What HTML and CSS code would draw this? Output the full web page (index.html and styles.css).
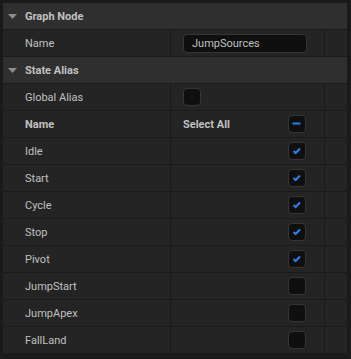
FILE: index.html
```html
<!DOCTYPE html>
<html>
<head>
<meta charset="utf-8">
<link rel="stylesheet" href="styles.css">
</head>
<body>
<div class="panel">
  <div class="section-header">
    <svg class="caret" width="9" height="5" viewBox="0 0 9 5"><path d="M0 0H9L4.5 5Z" fill="#8c8c8c"/></svg>
    <span>Graph Node</span>
  </div>
  <div class="row">
    <div class="cell label">Name</div>
    <div class="cell value"><div class="text-input">JumpSources</div></div>
    <div class="cell reset"></div>
  </div>
  <div class="section-header">
    <svg class="caret" width="9" height="5" viewBox="0 0 9 5"><path d="M0 0H9L4.5 5Z" fill="#8c8c8c"/></svg>
    <span>State Alias</span>
  </div>
  <div class="row">
    <div class="cell label">Global Alias</div>
    <div class="cell value"><span class="checkbox"></span></div>
    <div class="cell reset"></div>
  </div>
  <div class="row">
    <div class="cell label bold">Name</div>
    <div class="cell value"><span class="state-col bold">Select All</span><span class="checkbox"><svg width="18" height="18" viewBox="0 0 18 18"><rect x="4.5" y="7.5" width="8" height="2" fill="#2a80e6"/></svg></span></div>
    <div class="cell reset"></div>
  </div>
  <div class="row">
    <div class="cell label">Idle</div>
    <div class="cell value"><span class="state-col"></span><span class="checkbox"><svg width="18" height="18" viewBox="0 0 18 18"><path d="M5.5 9L7.6 11L12 6.5" fill="none" stroke="#2a80e6" stroke-width="2"/></svg></span></div>
    <div class="cell reset"></div>
  </div>
  <div class="row">
    <div class="cell label">Start</div>
    <div class="cell value"><span class="state-col"></span><span class="checkbox"><svg width="18" height="18" viewBox="0 0 18 18"><path d="M5.5 9L7.6 11L12 6.5" fill="none" stroke="#2a80e6" stroke-width="2"/></svg></span></div>
    <div class="cell reset"></div>
  </div>
  <div class="row">
    <div class="cell label">Cycle</div>
    <div class="cell value"><span class="state-col"></span><span class="checkbox"><svg width="18" height="18" viewBox="0 0 18 18"><path d="M5.5 9L7.6 11L12 6.5" fill="none" stroke="#2a80e6" stroke-width="2"/></svg></span></div>
    <div class="cell reset"></div>
  </div>
  <div class="row">
    <div class="cell label">Stop</div>
    <div class="cell value"><span class="state-col"></span><span class="checkbox"><svg width="18" height="18" viewBox="0 0 18 18"><path d="M5.5 9L7.6 11L12 6.5" fill="none" stroke="#2a80e6" stroke-width="2"/></svg></span></div>
    <div class="cell reset"></div>
  </div>
  <div class="row">
    <div class="cell label">Pivot</div>
    <div class="cell value"><span class="state-col"></span><span class="checkbox"><svg width="18" height="18" viewBox="0 0 18 18"><path d="M5.5 9L7.6 11L12 6.5" fill="none" stroke="#2a80e6" stroke-width="2"/></svg></span></div>
    <div class="cell reset"></div>
  </div>
  <div class="row">
    <div class="cell label">JumpStart</div>
    <div class="cell value"><span class="state-col"></span><span class="checkbox"></span></div>
    <div class="cell reset"></div>
  </div>
  <div class="row">
    <div class="cell label">JumpApex</div>
    <div class="cell value"><span class="state-col"></span><span class="checkbox"></span></div>
    <div class="cell reset"></div>
  </div>
  <div class="row">
    <div class="cell label">FallLand</div>
    <div class="cell value"><span class="state-col"></span><span class="checkbox"></span></div>
    <div class="cell reset"></div>
  </div>
</div>
</body>
</html>
```

FILE: styles.css
```css
html, body {
  margin: 0;
  padding: 0;
  background: #1a1a1a;
  height: 100%;
  overflow: hidden;
}

body {
  font-family: Roboto, "Noto Sans", sans-serif;
  font-size: 11px;
  color: #c0c0c0;
}

.panel {
  padding: 3px 4px 0 3px;
  display: flex;
  flex-direction: column;
}

.section-header {
  height: 26px;
  background: #2f2f2f;
  border-bottom: 1px solid #1a1a1a;
  display: flex;
  align-items: center;
  font-weight: bold;
}

.caret {
  margin-left: 5px;
  margin-right: 8px;
  margin-top: 1px;
}

.row {
  display: grid;
  grid-template-columns: 167px 153px 22px;
  column-gap: 1px;
  background: #1a1a1a;
  border-bottom: 1px solid #1a1a1a;
}

.cell {
  height: 26px;
  background: #242424;
  display: flex;
  align-items: center;
}

.label {
  padding-left: 22px;
}

.bold {
  font-weight: bold;
}

.value {
  padding-left: 12px;
}

.state-col {
  width: 105px;
  flex: none;
}

.text-input {
  box-sizing: border-box;
  width: 124px;
  height: 19px;
  background: #0f0f0f;
  border: 1px solid #353535;
  border-radius: 4px;
  padding-left: 8px;
  display: flex;
  align-items: center;
}

.checkbox {
  box-sizing: border-box;
  width: 18px;
  height: 18px;
  background: #0f0f0f;
  border: 1px solid #363636;
  border-radius: 4px;
  display: block;
  position: relative;
  flex: none;
}

.checkbox svg {
  position: absolute;
  left: -1px;
  top: -1px;
}
```
